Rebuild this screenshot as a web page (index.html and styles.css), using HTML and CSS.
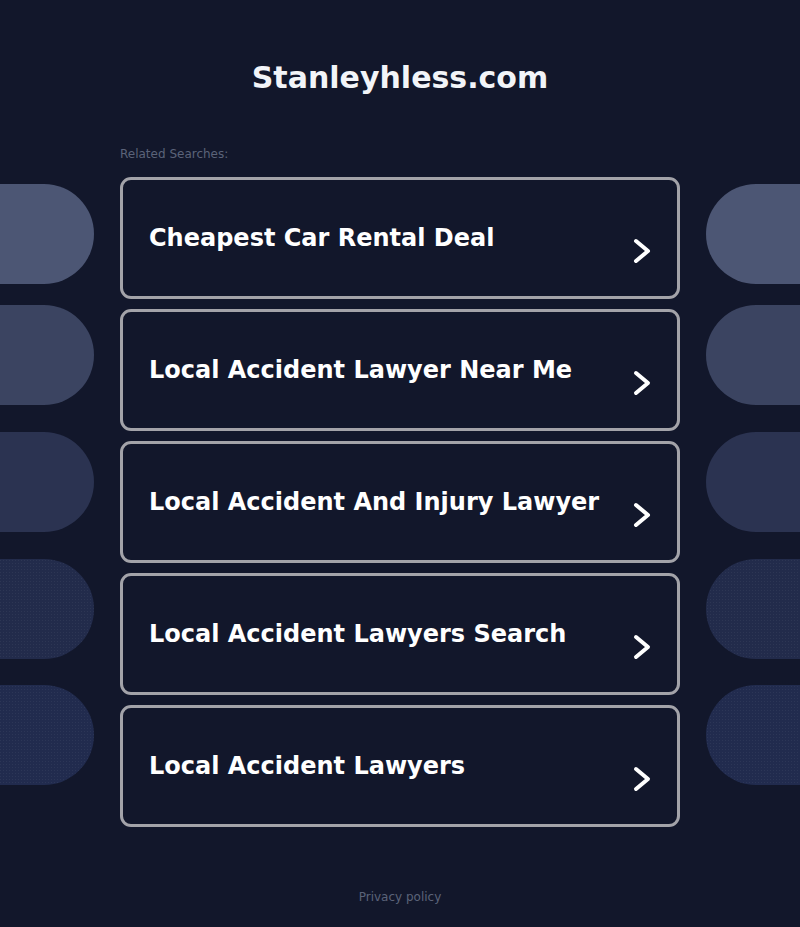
FILE: index.html
```html
<!DOCTYPE html>
<html lang="en">
<head>
<meta charset="utf-8">
<title>Stanleyhless.com</title>
<link rel="stylesheet" href="styles.css">
</head>
<body>
<div class="deco" aria-hidden="true">
  <span class="pill pill-l p1" style="top:184px"></span>
  <span class="pill pill-r p1" style="top:184px"></span>
  <span class="pill pill-l p2" style="top:305px"></span>
  <span class="pill pill-r p2" style="top:305px"></span>
  <span class="pill pill-l p3" style="top:432px"></span>
  <span class="pill pill-r p3" style="top:432px"></span>
  <span class="pill pill-l p4" style="top:559px"></span>
  <span class="pill pill-r p4" style="top:559px"></span>
  <span class="pill pill-l p5" style="top:685px"></span>
  <span class="pill pill-r p5" style="top:685px"></span>
</div>
<main class="page">
  <h1 class="site-title">Stanleyhless.com</h1>
  <section class="searches">
    <p class="label">Related Searches:</p>
    <ul class="list">
      <li><a class="card" href="#"><span class="card-text">Cheapest Car Rental Deal</span><svg class="chev" viewBox="0 0 20 28"><path d="M4 4 L16 14 L4 24"/></svg></a></li>
      <li><a class="card" href="#"><span class="card-text">Local Accident Lawyer Near Me</span><svg class="chev" viewBox="0 0 20 28"><path d="M4 4 L16 14 L4 24"/></svg></a></li>
      <li><a class="card" href="#"><span class="card-text">Local Accident And Injury Lawyer</span><svg class="chev" viewBox="0 0 20 28"><path d="M4 4 L16 14 L4 24"/></svg></a></li>
      <li><a class="card" href="#"><span class="card-text">Local Accident Lawyers Search</span><svg class="chev" viewBox="0 0 20 28"><path d="M4 4 L16 14 L4 24"/></svg></a></li>
      <li><a class="card" href="#"><span class="card-text">Local Accident Lawyers</span><svg class="chev" viewBox="0 0 20 28"><path d="M4 4 L16 14 L4 24"/></svg></a></li>
    </ul>
  </section>
  <footer class="footer"><a href="#" class="privacy">Privacy policy</a></footer>
</main>
</body>
</html>
```

FILE: styles.css
```css
html, body {
  margin: 0;
  padding: 0;
}
body {
  background: #12172b;
  font-family: "DejaVu Sans", "Noto Sans", sans-serif;
  color: #fff;
  min-height: 927px;
  position: relative;
  overflow: hidden;
}

/* side decoration, clipped at the window edges */
.deco {
  position: absolute;
  top: 0;
  left: 0;
  width: 100%;
  height: 927px;
  overflow: hidden;
  z-index: 0;
}
.pill {
  position: absolute;
  width: 200px;
  height: 100px;
  border-radius: 50px;
}
.pill-l { left: -106px; }
.pill-r { left: 706px; }
.p1 { background: #4c5674; }
.p2 { background: #3b4461; }
.p3 { background: #2b3351; }
.p4 {
  background-color: #222b4b;
  background-image: radial-gradient(rgba(255,255,255,0.05) 0.6px, transparent 0.8px);
  background-size: 3px 3px;
}
.p5 {
  background-color: #212b4e;
  background-image: radial-gradient(rgba(255,255,255,0.05) 0.6px, transparent 0.8px);
  background-size: 3px 3px;
}

.page {
  position: relative;
  z-index: 1;
  width: 560px;
  margin: 0 auto;
  padding-top: 59px;
}
.site-title {
  margin: 0;
  text-align: center;
  font-size: 30px;
  line-height: 38px;
  font-weight: bold;
  color: #f2f4f8;
}
.searches {
  margin-top: 49px;
}
.label {
  margin: 0;
  font-size: 12px;
  line-height: 16px;
  color: #5b6379;
}
.list {
  list-style: none;
  margin: 15px 0 0;
  padding: 0;
  display: flex;
  flex-direction: column;
  gap: 10px;
}
.card {
  box-sizing: border-box;
  height: 122px;
  display: flex;
  align-items: flex-start;
  justify-content: space-between;
  border: 3px solid #a3a3a9;
  border-radius: 11px;
  padding: 0 25px 0 26px;
  text-decoration: none;
  color: #fff;
  background: #12172b;
}
.card-text {
  font-size: 24px;
  font-weight: bold;
  line-height: 28px;
  margin-top: 44px;
  white-space: nowrap;
}
.chev {
  width: 20px;
  height: 28px;
  margin-top: 57px;
  flex: none;
}
.chev path {
  fill: none;
  stroke: #fff;
  stroke-width: 4;
  stroke-linecap: round;
  stroke-linejoin: round;
}
.footer {
  margin-top: 62px;
  text-align: center;
  font-size: 12px;
  line-height: 16px;
}
.privacy {
  color: #5b6379;
  text-decoration: none;
}
```
